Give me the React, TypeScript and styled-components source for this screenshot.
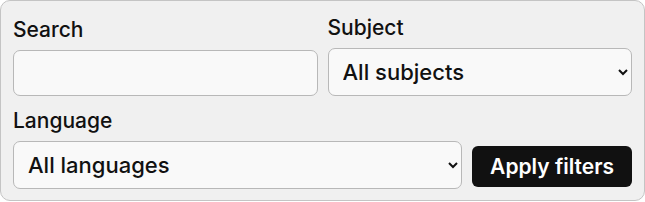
import React from 'react'
import styled, { createGlobalStyle } from 'styled-components'

const GlobalStyle = createGlobalStyle`
    html, body {
        margin: 0;
        padding: 0;
        background: #ffffff;
    }
    body {
        font-family: Inter, "Liberation Sans", sans-serif;
        color: #111111;
    }
`

const Panel = styled.form`
    box-sizing: border-box;
    width: 645px;
    height: 201px;
    padding: 13px 12px 11px;
    background-color: #f0f0f0;
    border: 1px solid #c4c4c4;
    border-radius: 10px;
    display: flex;
    flex-wrap: wrap;
    align-items: flex-end;
    gap: 12px 10px;
`

type FieldProps = {
    grow?: number
}

const Field = styled.label<FieldProps>`
    display: flex;
    flex-direction: column;
    gap: 8px;
    flex: ${({ grow }) => grow ?? 1} 1 280px;
    min-width: 0;
`

const LabelText = styled.span`
    font-size: 21px;
    font-weight: 500;
    line-height: 24px;
    color: #111111;
`

const TextInput = styled.input`
    box-sizing: border-box;
    height: 46px;
    padding: 0 12px;
    font-family: inherit;
    font-size: 22px;
    background-color: #f9f9f9;
    border: 1px solid #b8b8b8;
    border-radius: 7px;
    outline: none;
`

const Select = styled.select`
    box-sizing: border-box;
    height: 48px;
    padding: 0 6px 0 10px;
    font-family: inherit;
    font-size: 22px;
    font-weight: 500;
    color: #111111;
    background-color: #f9f9f9;
    border: 1px solid #b8b8b8;
    border-radius: 7px;
    outline: none;
`

const ApplyButton = styled.button`
    flex: none;
    height: 41px;
    margin-bottom: 2px;
    padding: 0 18px;
    font-family: inherit;
    font-size: 21px;
    font-weight: 600;
    color: #ffffff;
    background-color: #111111;
    border: none;
    border-radius: 6px;
    cursor: pointer;
`

const App: React.FC = () => {
    return (
        <>
            <GlobalStyle />
            <Panel onSubmit={(e) => e.preventDefault()}>
                <Field>
                    <LabelText>Search</LabelText>
                    <TextInput type="text" />
                </Field>
                <Field>
                    <LabelText>Subject</LabelText>
                    <Select defaultValue="">
                        <option value="">All subjects</option>
                    </Select>
                </Field>
                <Field grow={3}>
                    <LabelText>Language</LabelText>
                    <Select defaultValue="">
                        <option value="">All languages</option>
                    </Select>
                </Field>
                <ApplyButton type="submit">Apply filters</ApplyButton>
            </Panel>
        </>
    )
}

export default App
